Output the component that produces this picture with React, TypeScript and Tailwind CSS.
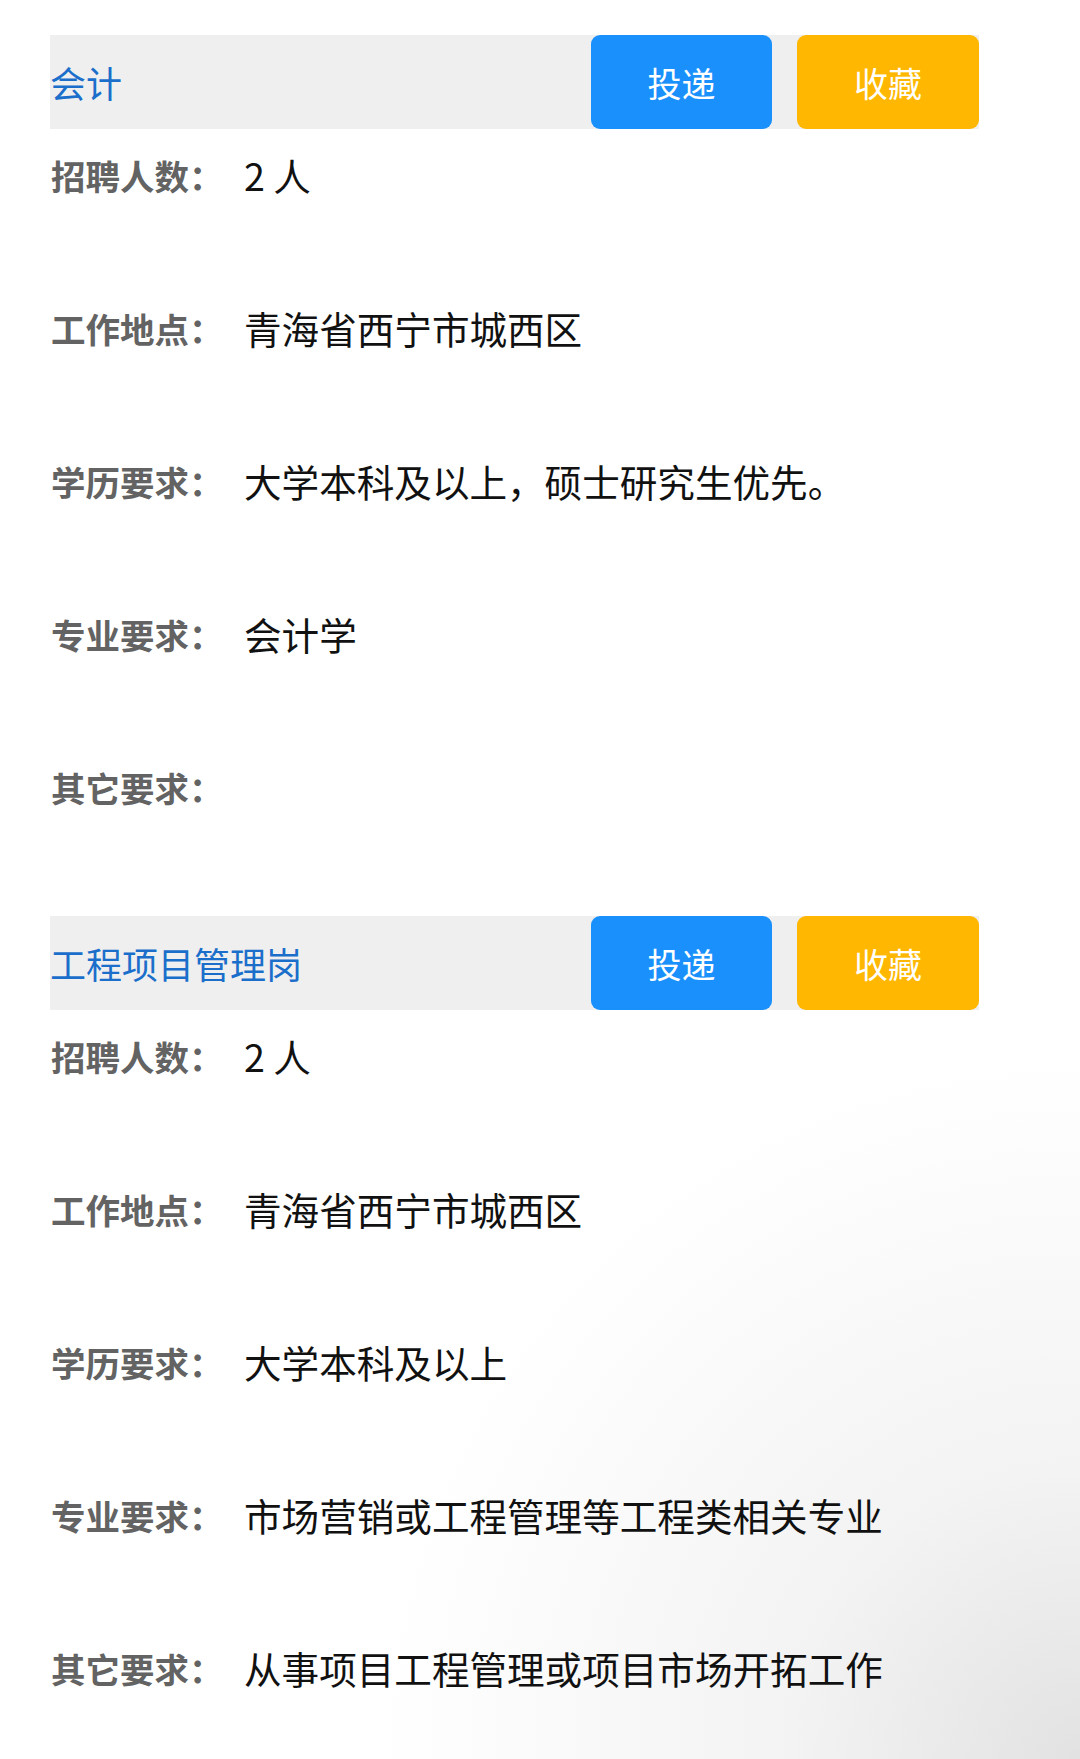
import React from 'react';

type Job = {
    title: string;
    rows: { label: string; value: string }[];
};

const jobs: Job[] = [
    {
        title: '会计',
        rows: [
            { label: '招聘人数：', value: '2 人' },
            { label: '工作地点：', value: '青海省西宁市城西区' },
            { label: '学历要求：', value: '大学本科及以上，硕士研究生优先。' },
            { label: '专业要求：', value: '会计学' },
            { label: '其它要求：', value: '' },
        ],
    },
    {
        title: '工程项目管理岗',
        rows: [
            { label: '招聘人数：', value: '2 人' },
            { label: '工作地点：', value: '青海省西宁市城西区' },
            { label: '学历要求：', value: '大学本科及以上' },
            { label: '专业要求：', value: '市场营销或工程管理等工程类相关专业' },
            { label: '其它要求：', value: '从事项目工程管理或项目市场开拓工作' },
        ],
    },
];

const JobCard = ({ job }: { job: Job }) => {
    return (
        <div className="flex flex-col">
            <div className="flex h-[94px] items-center bg-[#efefef]">
                <h2 className="flex-1 text-[36px] leading-none font-normal text-[#1b6fcb]">
                    {job.title}
                </h2>
                <button className="h-full w-[181px] rounded-[9px] bg-[#1a90fd] text-[34px] text-white">
                    投递
                </button>
                <button className="ml-[25px] h-full w-[182px] rounded-[9px] bg-[#ffb701] text-[34px] text-white">
                    收藏
                </button>
            </div>
            <div className="mt-[22px] flex flex-col">
                {job.rows.map((row, index) => (
                    <div
                        key={`${job.title}-${index}`}
                        className="flex h-[153px] items-start leading-[48px]"
                    >
                        <span className="w-[194px] shrink-0 pl-[1px] text-[34.5px] font-bold text-[#636363]">
                            {row.label}
                        </span>
                        <span className="text-[37.6px] text-[#111111]">{row.value}</span>
                    </div>
                ))}
            </div>
        </div>
    );
};

export default function App() {
    return (
        <div
            className="h-[1759px] w-[1080px] overflow-hidden bg-[radial-gradient(circle_at_100%_100%,#e2e2e2_0%,#f3f3f3_14%,#ffffff_34%)] pt-[35px] pr-[101px] pl-[50px]"
            style={{ fontFamily: '"Noto Sans CJK SC", "Noto Sans", sans-serif' }}
        >
            {jobs.map((job) => (
                <JobCard key={job.title} job={job} />
            ))}
        </div>
    );
}
